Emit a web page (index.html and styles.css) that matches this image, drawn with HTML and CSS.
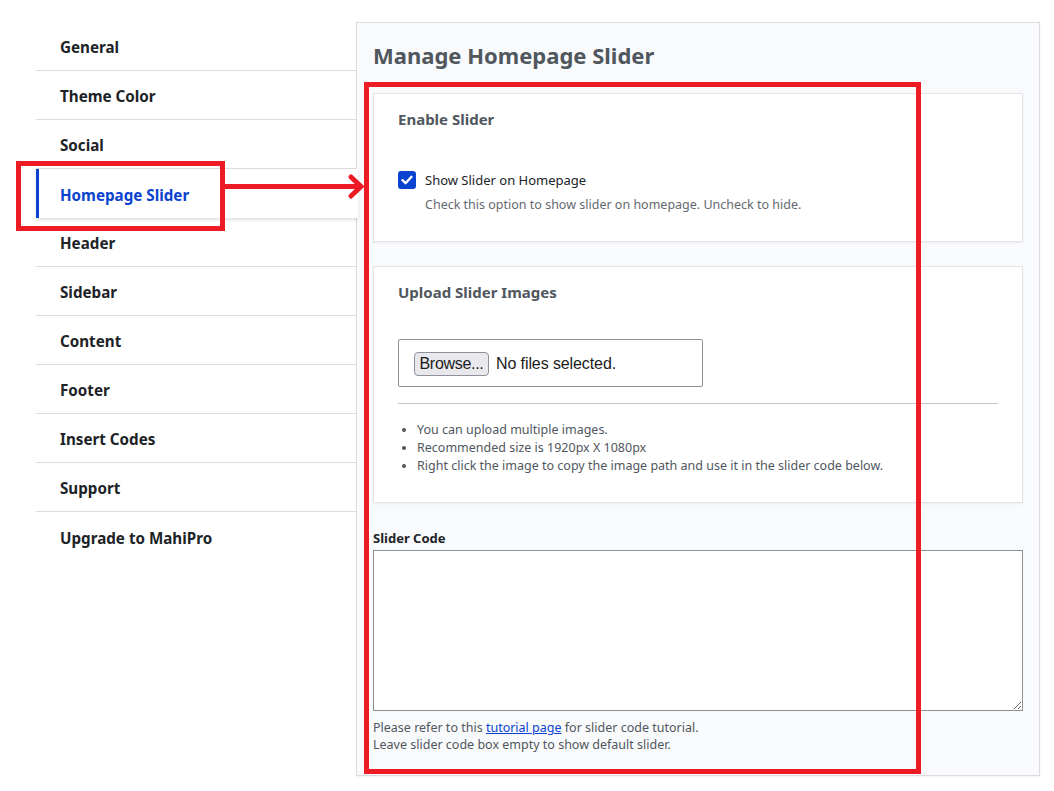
FILE: index.html
```html
<!DOCTYPE html>
<html>
<head>
<meta charset="utf-8">
<link rel="stylesheet" href="styles.css">
</head>
<body>
<div class="wrap">
  <nav class="sidebar">
    <div class="item">General</div>
    <div class="item">Theme Color</div>
    <div class="item">Social</div>
    <div class="item active">Homepage Slider</div>
    <div class="item">Header</div>
    <div class="item">Sidebar</div>
    <div class="item">Content</div>
    <div class="item">Footer</div>
    <div class="item">Insert Codes</div>
    <div class="item">Support</div>
    <div class="item last">Upgrade to MahiPro</div>
  </nav>
  <main class="panel">
    <h1 class="title">Manage Homepage Slider</h1>
    <section class="card card-enable">
      <h2 class="card-title">Enable Slider</h2>
      <div class="check-row">
        <span class="checkbox"><svg width="18" height="18" viewBox="0 0 18 18"><path d="M4.5 9.2 L7.6 12.2 L13.5 5.8" fill="none" stroke="#fff" stroke-width="2.4" stroke-linecap="round" stroke-linejoin="round"/></svg></span>
        <span class="check-label">Show Slider on Homepage</span>
      </div>
      <p class="desc">Check this option to show slider on homepage. Uncheck to hide.</p>
    </section>
    <section class="card card-upload">
      <h2 class="card-title">Upload Slider Images</h2>
      <div class="filebox"><span class="browse">Browse...</span><span class="nofile">No files selected.</span></div>
      <hr class="sep">
      <ul class="notes">
        <li>You can upload multiple images.</li>
        <li>Recommended size is 1920px X 1080px</li>
        <li>Right click the image to copy the image path and use it in the slider code below.</li>
      </ul>
    </section>
    <label class="code-label">Slider Code</label>
    <textarea class="code"></textarea>
    <p class="help">Please refer to this <a href="#">tutorial page</a> for slider code tutorial.<br>Leave slider code box empty to show default slider.</p>
  </main>
</div>
<svg class="annot" width="1054" height="791" viewBox="0 0 1054 791">
  <rect x="18.5" y="163.5" width="204" height="65" fill="none" stroke="#ed1c24" stroke-width="5"/>
  <line x1="222" y1="186.5" x2="360" y2="186.5" stroke="#ed1c24" stroke-width="5"/>
  <path d="M351 177 L361 186.5 L351 196" fill="none" stroke="#ed1c24" stroke-width="5" stroke-linecap="round" stroke-linejoin="miter"/>
  <rect x="366.5" y="84.5" width="552" height="687" fill="none" stroke="#ed1c24" stroke-width="5"/>
</svg>
</body>
</html>
```
FILE: styles.css
```css
* { box-sizing: border-box; }
html, body { margin: 0; padding: 0; background: #fff; }
body {
  font-family: "Noto Sans", "Open Sans", sans-serif;
  color: #1d2327;
  width: 1054px;
  height: 791px;
  overflow: hidden;
  position: relative;
}
.wrap {
  display: flex;
  align-items: flex-start;
  padding: 22px 0 0 36px;
}
.sidebar {
  width: 320px;
  flex: none;
  position: relative;
  z-index: 2;
}
.item {
  height: 49px;
  border-bottom: 1px solid #dcdcde;
  padding-left: 24px;
  padding-top: 2px;
  display: flex;
  align-items: center;
  font-size: 15.2px;
  font-weight: 700;
  color: #1d2327;
}
.item.last { border-bottom: none; }
.item.active {
  color: #0a43d0;
  border-left: 3px solid #0a43d0;
  padding-left: 21px;
  margin-right: -2px;
  background: #fff;
  box-shadow: 0 2px 3px rgba(0,0,0,0.12);
  position: relative;
  border-bottom: none;
  height: 49px;
}
.panel {
  width: 684px;
  height: 754px;
  flex: none;
  background: #f9fafb;
  border: 1px solid #dcdcde;
  box-shadow: 0 1px 2px rgba(0,0,0,0.06);
  padding: 17px 16px 0 16px;
}
.title {
  margin: 0;
  font-size: 22px;
  line-height: 30px;
  font-weight: 700;
  color: #50575e;
}
.card {
  background: #fff;
  border: 1px solid #e2e4e7;
  box-shadow: 0 1px 2px rgba(0,0,0,0.06);
  padding: 14px 24px 0 24px;
}
.card-enable { margin-top: 23px; height: 149px; }
.card-upload { margin-top: 24px; height: 237px; }
.card-title {
  margin: 0;
  font-size: 15px;
  line-height: 22px;
  font-weight: 700;
  color: #50575e;
}
.check-row {
  display: flex;
  align-items: center;
  gap: 9px;
  margin-top: 40px;
  height: 20px;
}
.checkbox {
  width: 18px;
  height: 18px;
  border-radius: 3px;
  background: #0a43d0;
  display: block;
  flex: none;
}
.checkbox svg { display: block; }
.check-label {
  font-size: 13px;
  line-height: 20px;
  color: #1d2327;
}
.desc {
  margin: 5px 0 0 27px;
  font-size: 12.5px;
  line-height: 20px;
  color: #646970;
}
.filebox {
  margin-top: 36px;
  width: 305px;
  height: 48px;
  border: 1px solid #8c8f94;
  border-radius: 2px;
  display: flex;
  align-items: center;
  padding-left: 15px;
  font-family: "Liberation Sans", Arial, sans-serif;
  font-size: 16px;
  color: #1b1b1b;
  letter-spacing: -0.3px;
}
.browse {
  height: 24px;
  width: 75px;
  border: 1px solid #8f8f9d;
  border-radius: 4px;
  background: #e9e9ed;
  display: flex;
  align-items: center;
  justify-content: center;
  margin-right: 7px;
  margin-top: 2px;
}
.nofile { margin-top: 2px; letter-spacing: -0.1px; }
.sep {
  margin: 16px 0 0 0;
  border: 0;
  border-top: 1px solid #c3c4c7;
  height: 0;
}
.notes {
  margin: 17px 0 0 0;
  padding-left: 19px;
  font-size: 12.5px;
  line-height: 18px;
  color: #50575e;
}
.code-label {
  display: block;
  margin-top: 26px;
  font-size: 13px;
  line-height: 18px;
  font-weight: 700;
  color: #1d2327;
}
.code {
  display: block;
  width: 650px;
  height: 161px;
  margin-top: 3px;
  border: 1px solid #8c8f94;
  border-radius: 0;
  background: #fff;
  resize: vertical;
}
.help {
  margin: 8px 0 0 0;
  font-size: 12.5px;
  line-height: 17px;
  color: #50575e;
}
.help a { color: #0a43d0; text-decoration: underline; }
.annot {
  position: absolute;
  left: 0;
  top: 0;
  pointer-events: none;
  z-index: 10;
}
```
